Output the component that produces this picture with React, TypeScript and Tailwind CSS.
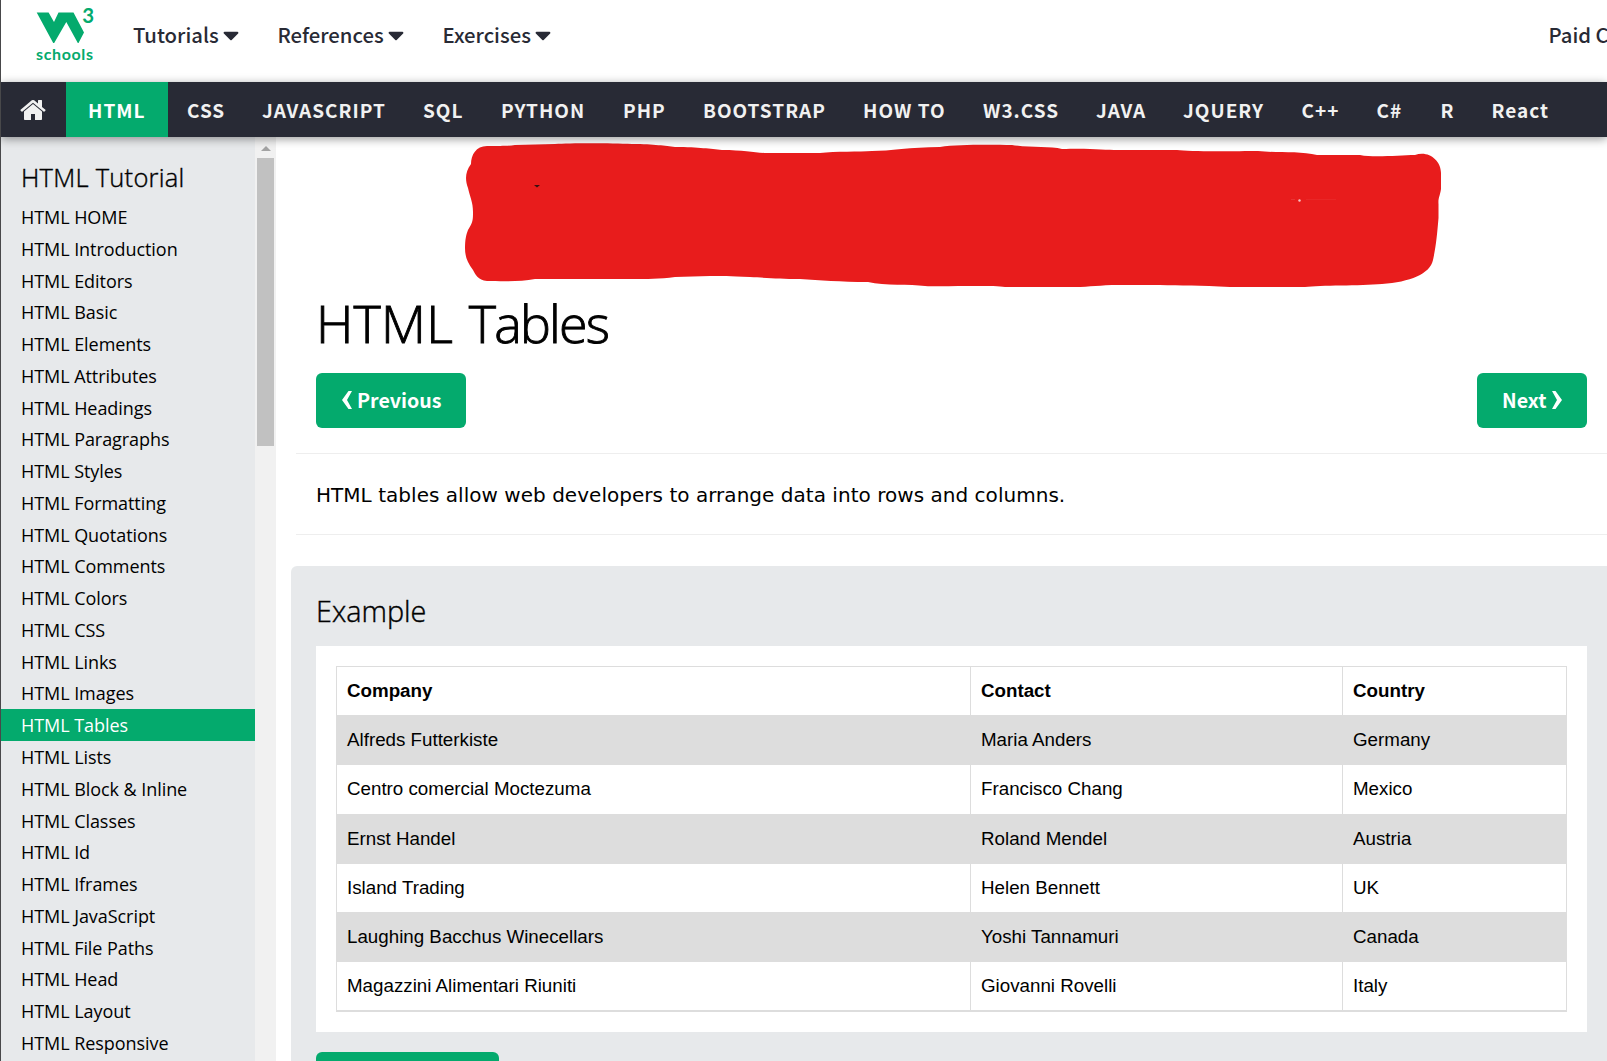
import React from "react";
import { FaCaretDown } from "react-icons/fa";

const nav: [string, string][] = [
  ["CSS", "w-[75px]"],
  ["JAVASCRIPT", "w-[161px]"],
  ["SQL", "w-[78px]"],
  ["PYTHON", "w-[122px]"],
  ["PHP", "w-[80px]"],
  ["BOOTSTRAP", "w-[160px]"],
  ["HOW TO", "w-[120px]"],
  ["W3.CSS", "w-[113px]"],
  ["JAVA", "w-[87px]"],
  ["JQUERY", "w-[118.500px]"],
  ["C++", "w-[75px]"],
  ["C#", "w-[64px]"],
  ["R", "w-[51px]"],
  ["React", "w-[100px]"],
];

const lessons = [
  "HOME", "Introduction", "Editors", "Basic", "Elements", "Attributes", "Headings",
  "Paragraphs", "Styles", "Formatting", "Quotations", "Comments", "Colors", "CSS",
  "Links", "Images", "Tables", "Lists", "Block & Inline", "Classes", "Id", "Iframes",
  "JavaScript", "File Paths", "Head", "Layout", "Responsive",
];

const rows = [
  ["Alfreds Futterkiste", "Maria Anders", "Germany"],
  ["Centro comercial Moctezuma", "Francisco Chang", "Mexico"],
  ["Ernst Handel", "Roland Mendel", "Austria"],
  ["Island Trading", "Helen Bennett", "UK"],
  ["Laughing Bacchus Winecellars", "Yoshi Tannamuri", "Canada"],
  ["Magazzini Alimentari Riuniti", "Giovanni Rovelli", "Italy"],
];

function Logo() {
  return (
    <svg className="h-[82px] w-[100px] shrink-0" viewBox="0 0 100 82" fill="#04AA6D">
      <path d="M35.700 12.500H47.600L53 22L57.500 12.500H72.500L83 32.500L77.500 43H76.800L65.300 22L53.200 43H52.200Z" />
      <text x="81.300" y="22.700" fontSize="20.500" fontWeight="700" fontFamily="Lato">3</text>
      <text x="35" y="60.300" fontSize="16" fontWeight="700" fontFamily="Lato" textLength="57">schools</text>
    </svg>
  );
}

function Home() {
  return (
    <svg className="h-[28px] w-[26px]" viewBox="0 0 1664 1792" fill="#f1f1f1">
      <path d="M1408 992v480q0 26-19 45t-45 19h-384v-384h-256v384h-384q-26 0-45-19t-19-45v-480q0-1 .5-3t.5-3l575-474 575 474q1 2 1 6zm223-69l-62 74q-8 9-21 11h-3q-13 0-21-7l-692-577-692 577q-12 8-24 7-13-2-21-11l-62-74q-8-10-7-23.500t11-21.500l719-599q32-26 76-26t76 26l244 204v-195q0-14 9-23t23-9h192q14 0 23 9t9 23v408l219 182q10 8 11 21.500t-7 23.500z" />
    </svg>
  );
}

function Menu({ label, width }: { label: string; width: string }) {
  return (
    <div className={`flex shrink-0 items-center gap-[4px] ${width}`}>
      <span>{label}</span>
      <FaCaretDown className="h-[26px] w-[16px] shrink-0" preserveAspectRatio="none" />
    </div>
  );
}

function Redaction() {
  return (
    <svg className="ml-[169px] h-[149px] w-[985px]" viewBox="460 137 985 149" overflow="visible">
      <path
        fill="#E81C1C"
        d="M487 146C500 146 508 146 515 145L555 144C570 143 610 143 632 144C655 144 665 146 675 147C700 147 710 149 722 150C745 150 755 153 768 153H820C835 151 860 152 872 151C890 151 910 147 940 147C960 144 995 145 1012 145C1030 148 1050 146 1062 149C1090 148 1105 150 1118 150H1177C1190 152 1240 151 1258 151C1275 153 1300 151 1317 155H1360C1375 158 1400 155 1415 155C1428 150 1441 160 1441 173V189C1440 196 1438 198 1438.500 204V218C1437 236 1436 246 1433 260C1430 274 1410 282 1382 284C1360 286 1320 285 1305 287H1230C1200 285 1180 286 1160 285H1118C1100 285 1090 287 1075 287H1005C990 285 940 287 925 286C910 284 885 286 868 282C840 282 820 280 800 279C780 279 770 278 750 277C730 276 720 276 710 276L675 277C660 279 645 279 635 279H535C520 282 500 281 487 281C478 280 475 274 473 270C467 262 465 256 465 248C465 240 466 235 468 230C473 222 473 220 473 212C473 202 470 197 468 188C465 180 465 172 471 164C471 155 476 146 487 146Z"
      />
      <path fill="#3a1010" d="M534 185h6l-3 2.500z" />
      <path fill="#ea4a4a" d="M1291 199h4v.6h-4zM1306 199h30v.25h-30z" />
      <circle cx="1299.500" cy="200.500" r="1.200" fill="#f7c4c4" />
    </svg>
  );
}

export default function App() {
  return (
    <div className="flex h-[1061px] w-[1607px] flex-col overflow-hidden border-l border-[#48484a] bg-white text-black">
      <header className="flex h-[82px] shrink-0 overflow-hidden bg-white font-['Noto_Sans_CJK_SC',sans-serif] text-[20.300px] font-medium whitespace-nowrap text-[#282A35]">
        <Logo />
        <div className="flex h-[69px] flex-1 items-center pl-[32px]">
          <Menu label="Tutorials" width="w-[144.500px]" />
          <Menu label="References" width="w-[165px]" />
          <Menu label="Exercises" width="w-[165px]" />
          <span className="ml-auto w-[58.500px] shrink-0">Paid Courses</span>
        </div>
      </header>

      <nav className="relative z-10 flex h-[55px] shrink-0 items-center bg-[#282A35] font-['Noto_Sans_CJK_SC',sans-serif] text-[19px] font-bold tracking-[1px] whitespace-nowrap text-[#f1f1f1] shadow-[0_2px_9px_rgba(0,0,0,0.4)]">
        <div className="flex h-full w-[65px] items-center pl-[19px]"><Home /></div>
        <div className="flex h-full w-[102px] items-center bg-[#04AA6D] pt-[2px] pl-[22px] text-white">HTML</div>
        {nav.map(([label, width]) => (
          <div key={label} className={`shrink-0 pt-[2px] pl-[19px] ${width}`}>{label}</div>
        ))}
      </nav>

      <div className="flex min-h-0 flex-1">
        <aside className="flex w-[275px] shrink-0 overflow-hidden font-['Open_Sans','Noto_Sans',sans-serif] whitespace-nowrap">
          <div className="w-[254px] shrink-0 bg-[#E7E9EB] pt-[21px]">
            <h2 className="mb-[5px] h-[38px] pl-[20px] text-[25.500px] leading-[38px] font-light tracking-[0.250px] [-webkit-text-stroke:0.4px_black]">HTML Tutorial</h2>
            {lessons.map((l) => (
              <div
                key={l}
                className={`h-[31.770px] pl-[20px] text-[18px] leading-[33.770px] tracking-[-0.060px] ${
                  l === "Tables" ? "bg-[#04AA6D] text-white" : ""
                }`}
              >
                HTML {l}
              </div>
            ))}
          </div>
          <div className="flex w-[21px] flex-col items-center bg-[#f1f1f1] pt-[9px]">
            <svg className="h-[5px] w-[10px]" viewBox="0 0 10 5"><path d="M0 5L5 0L10 5Z" fill="#a3a3a3" /></svg>
            <div className="mt-[7px] h-[288px] w-[17px] bg-[#c1c1c1]" />
          </div>
        </aside>

        <main className="min-w-0 flex-1 pl-[15px]">
          <div className="h-[149px]"><Redaction /></div>
          <h1 className="ml-[25px] h-[76px] font-['Open_Sans','Noto_Sans',sans-serif] text-[52px] leading-[74px] font-light tracking-[0.200px] [word-spacing:2px] [-webkit-text-stroke:0.9px_black]">
            HTML <span className="tracking-[-1.800px]">Tables</span>
          </h1>
          <div className="mt-[11px] flex h-[55px] justify-between pr-[20px] pl-[25px] font-['Noto_Sans_CJK_SC',sans-serif] text-[19.600px] font-bold text-white">
            <button className="flex w-[150px] items-center rounded-[6px] bg-[#04AA6D] pb-[2px] pl-[26px]">
              <svg className="mr-[5px] h-[18px] w-[10px]" viewBox="0 0 10 18" fill="#fff"><path d="M6.500 0H10L5 9L10 18H6.500L0 9Z" /></svg>
              Previous
            </button>
            <button className="flex w-[110px] items-center rounded-[6px] bg-[#04AA6D] pb-[2px] pl-[25px]">
              Next
              <svg className="ml-[6px] h-[18px] w-[10px]" viewBox="0 0 10 18" fill="#fff"><path d="M0 0H3.500L10 9L3.500 18H0L5 9Z" /></svg>
            </button>
          </div>
          <div className="mt-[25px] ml-[5px] flex h-[82px] items-center border-y border-[#eeeeee] pt-[2px] pl-[20px] font-['DejaVu_Sans',sans-serif] text-[20px] tracking-[0.030px]">
            HTML tables allow web developers to arrange data into rows and columns.
          </div>
          <section className="mt-[31px] h-[520px] rounded-l-[6px] bg-[#E7E9EB] pt-[23px] pr-[20px] pl-[25px]">
            <h3 className="h-[44px] font-['Open_Sans','Noto_Sans',sans-serif] text-[28.800px] leading-[44px] font-light [-webkit-text-stroke:0.4px_black]">Example</h3>
            <div className="mt-[13px] h-[386px] bg-white p-[20px]">
              <table className="h-[346px] w-full table-fixed border-collapse border border-b-2 border-[#dddddd] font-['Liberation_Sans',sans-serif] text-[18.750px]">
                <colgroup>
                  <col className="w-[634px]" />
                  <col className="w-[372px]" />
                  <col />
                </colgroup>
                <thead>
                  <tr>
                    {["Company", "Contact", "Country"].map((h) => (
                      <th key={h} className="h-[49px] border border-[#dddddd] px-[10px] py-0 text-left">{h}</th>
                    ))}
                  </tr>
                </thead>
                <tbody>
                  {rows.map((r) => (
                    <tr key={r[0]} className="odd:bg-[#dddddd]">
                      {r.map((c) => (
                        <td key={c} className="h-[49px] border border-[#dddddd] px-[10px] py-0">{c}</td>
                      ))}
                    </tr>
                  ))}
                </tbody>
              </table>
            </div>
            <div className="mt-[20px] h-[50px] w-[183px] rounded-[6px] bg-[#04AA6D]" />
          </section>
        </main>
      </div>
    </div>
  );
}
